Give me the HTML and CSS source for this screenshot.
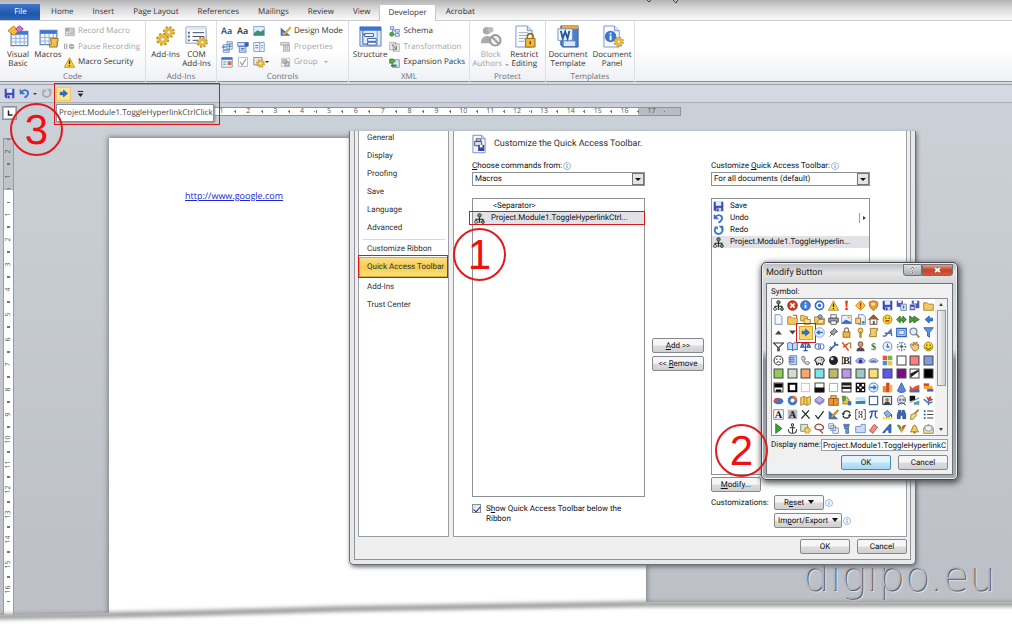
FILE: index.html
```html
<!DOCTYPE html>
<html lang="en">
<head>
<meta charset="utf-8">
<title>Customize the Quick Access Toolbar</title>
<link rel="stylesheet" href="styles.css">
</head>
<body>
<svg class="defs" aria-hidden="true">
  <symbol id="i-org" viewBox="0 0 16 16"><path d="M8 5v4M3 12V9h10v3M8 9v3" fill="none" stroke="#222" stroke-width="1.6"/><circle cx="8" cy="3.500" r="2.600" fill="#5a9a4a" stroke="#222"/><circle cx="3" cy="13" r="2.200" fill="#cde" stroke="#222"/><circle cx="8" cy="13" r="1.500" fill="#333"/><circle cx="13" cy="13" r="2.200" fill="#6a6" stroke="#222"/></symbol>
  <symbol id="i-save" viewBox="0 0 16 16"><path d="M1 1h14v14H3l-2-2z" fill="#3d49b5"/><path d="M4 1h8v6H4z" fill="#e6ebfa"/><path d="M5 10h7v5H5z" fill="#cdd3ee"/><path d="M6 11h2v4H6z" fill="#2a3390"/></symbol>
  <symbol id="i-undo" viewBox="0 0 16 16"><path d="M4 5c5-4 10-1 9 4-1 3-3 4-5 5" fill="none" stroke="#3f74cc" stroke-width="2.800"/><path d="M1 1v8h8z" fill="#3f74cc"/></symbol>
  <symbol id="i-redo" viewBox="0 0 16 16"><path d="M4 4c-3 4-1 9 4 9s7-5 5-9" fill="none" stroke="currentColor" stroke-width="2.800"/><path d="M8 1h7v7z" fill="currentColor"/><path d="M1 2h6v5z" fill="currentColor"/></symbol>
  <symbol id="i-right" viewBox="0 0 16 16"><path d="M3 6h5V3l6 5-6 5v-3H3z" fill="#2f6fd0" stroke="#1c4c9c" stroke-width=".8"/></symbol>
  <symbol id="i-warn" viewBox="0 0 16 16"><path d="M8 1l7.500 14H.5z" fill="#f8d23c" stroke="#a87d10"/><path d="M8 5v5M8 11.500v2" stroke="#222" stroke-width="1.800"/></symbol>
  <symbol id="i-info" viewBox="0 0 16 16"><circle cx="8" cy="8" r="7" fill="#fff" stroke="#76a3d6" stroke-width="1.500"/><path d="M8 7v5M8 4v2" stroke="#4f86c6" stroke-width="1.800"/></symbol>
  <symbol id="i-gear" viewBox="0 0 16 16"><circle cx="8" cy="8" r="6" fill="none" stroke="#b98d1c" stroke-width="3.500" stroke-dasharray="2.700 2"/><circle cx="8" cy="8" r="4.300" fill="#fff" stroke="#e5b83a" stroke-width="3.400"/><circle cx="8" cy="8" r="2.200" fill="none" stroke="#ab8019" stroke-width=".7"/></symbol>
  <symbol id="i-table" viewBox="0 0 16 16"><path d="M1 2h14v12H1z" fill="#f3f8ff" stroke="#6484b8"/><path d="M1 2h14v3H1z" fill="#3f77cf"/><path d="M1 8h14M1 11h14M5 5v9M8.500 5v9M12 5v9" stroke="#93afd9" stroke-width=".8"/></symbol>
</svg>

<header class="ribbon">
  <nav class="tabs" aria-label="Ribbon tabs">
    <button class="tab file">File</button><button class="tab">Home</button><button class="tab">Insert</button><button class="tab">Page Layout</button><button class="tab">References</button><button class="tab">Mailings</button><button class="tab">Review</button><button class="tab">View</button><button class="tab active">Developer</button><button class="tab">Acrobat</button>
    <svg class="caption-remnant" viewBox="0 0 34 4" aria-hidden="true"><path d="M2 0l2 2 2-2M28 0l3 3 2-3" fill="none" stroke="#444"/></svg>
  </nav>
  <div class="groups">
    <section class="group g-code">
      <div class="tools">
        <button class="big"><svg viewBox="0 0 24 24"><use href="#i-table" x="2" y="4" width="22" height="20"/><path d="M7 1l5 5-5 5-6-5z" fill="#f3bb3b" stroke="#b8841a"/><path d="M13 1l4 3-4 4-4-4z" fill="#d374cf" stroke="#9a3f97"/></svg><span>Visual<br>Basic</span></button>
        <button class="big"><svg viewBox="0 0 24 24"><use href="#i-table" x="1" y="3" width="22" height="20"/><path d="M14 14h8v3h-1v6h-8v-3h2z" fill="#f0bf55" stroke="#9e711b"/></svg><span>Macros</span></button>
        <div class="stack">
          <button class="small off"><svg viewBox="0 0 16 16"><path d="M2 3h13v11H2z" fill="#ddd" stroke="#999"/><path d="M2 3h6v5H2z" fill="#aaa"/><path d="M10 6h4M10 9h4M5 11h9" stroke="#999"/></svg>Record Macro</button>
          <button class="small off"><svg viewBox="0 0 16 16"><path d="M1 4v8M4 4v8" stroke="#999" stroke-width="1.500"/><circle cx="11" cy="8" r="4" fill="#aaa"/><path d="M9 8h5" stroke="#eee"/></svg>Pause Recording</button>
          <button class="small"><svg><use href="#i-warn"/></svg>Macro Security</button>
        </div>
      </div>
      <h2>Code</h2>
    </section>
    <section class="group g-addins">
      <div class="tools">
        <button class="big"><svg viewBox="0 0 24 24"><use href="#i-gear" x="9" y="1" width="13" height="13"/><use href="#i-gear" x="2" y="8" width="14" height="14"/></svg><span>Add-Ins</span></button>
        <button class="big"><svg viewBox="0 0 24 24"><path d="M1 2h21v17H1z" fill="#fafcff" stroke="#8797b4"/><path d="M1 2h21v3H1z" fill="#dce5f2"/><path d="M8 8h12M8 12h12M8 16h6" stroke="#446"/><path d="M3 8h2M3 12h2M3 16h2" stroke="#36b" stroke-width="2"/><use href="#i-gear" x="12" y="12" width="12" height="12"/></svg><span>COM<br>Add-Ins</span></button>
      </div>
      <h2>Add-Ins</h2>
    </section>
    <section class="group g-controls">
      <div class="tools">
        <div class="icon-grid">
          <button class="aa blue">Aa</button><button class="aa">Aa</button>
          <button aria-label="Picture"><svg viewBox="0 0 16 16"><path d="M1 2h14v12H1z" fill="#d9f1fb" stroke="#7891b5"/><path d="M1 11l5-4 4 2 5-3v8H1z" fill="#3a8f79"/></svg></button>
          <button aria-label="Building block"><svg viewBox="0 0 16 16"><path d="M3 5h8v10H3zM8 1h7v10H8z" fill="#e7effb" stroke="#5779b2"/><path d="M1 8h6M4 12h6M10 4h4M10 7h4" stroke="#36a" stroke-width="1.400"/></svg></button>
          <button aria-label="Combo box"><svg viewBox="0 0 16 16"><path d="M1 2h14v5H1zM3 7h9v8H3z" fill="#d7e4f8" stroke="#416ab0"/><path d="M10 2h5v5h-5z" fill="#3266b5"/><path d="M5 10h5M5 12h5" stroke="#36a"/></svg></button>
          <button aria-label="Drop-down list"><svg viewBox="0 0 16 16"><path d="M1 2h14v12H1z" fill="#eef4fd" stroke="#6e8ab7"/><path d="M9 2v12" stroke="#6e8ab7"/><path d="M3 6h4M3 9h4M11 6h2M11 9h2" stroke="#36a"/></svg></button>
          <button aria-label="Date picker"><svg viewBox="0 0 16 16"><path d="M1 2h14v13H1z" fill="#eaf1fb" stroke="#6c88b4"/><path d="M1 2h14v3H1z" fill="#3c73c8"/><path d="M9 7h5v5H9z" fill="#e7653f"/><path d="M3 8h4M3 11h4" stroke="#57a"/></svg></button>
          <button aria-label="Check box"><svg viewBox="0 0 16 16"><path d="M2 2h12v12H2z" fill="#fff" stroke="#aaa"/><path d="M4 8l3 4 5-8" fill="none" stroke="#999" stroke-width="1.600"/></svg></button>
          <button aria-label="Legacy tools" class="drop tight"><svg viewBox="0 0 16 16"><path d="M1 2h11v10H1z" fill="#e8e8e8" stroke="#777"/><use href="#i-gear" x="4" y="4" width="12" height="12"/></svg></button>
        </div>
        <div class="stack">
          <button class="small"><svg viewBox="0 0 16 16"><path d="M1 2v12h14z" fill="#4373c5"/><path d="M4 9v3h4z" fill="#fff"/><path d="M15 1L6 10l-2 4 4-2 8-9z" fill="#f0b43c" stroke="#9a6b14" stroke-width=".6"/></svg>Design Mode</button>
          <button class="small off"><svg viewBox="0 0 16 16"><path d="M1 2h12v4H1zM5 6h9v9H5z" fill="#ddd" stroke="#999"/><path d="M7 9h5M7 12h5" stroke="#999"/></svg>Properties</button>
          <button class="small off drop"><svg viewBox="0 0 16 16"><path d="M2 2h12v12H2z" fill="none" stroke="#999" stroke-dasharray="2 1"/><path d="M4 4h6v5H4zM7 7h6v6H7z" fill="#ccc" stroke="#888"/></svg>Group</button>
        </div>
      </div>
      <h2>Controls</h2>
    </section>
    <section class="group g-xml">
      <div class="tools">
        <button class="big"><svg viewBox="0 0 24 24"><path d="M1 2h22v20H1z" fill="#dfeafa" stroke="#5879b5"/><path d="M1 2h22v4H1z" fill="#3a75d4"/><path d="M6 9h9v3H6zM9 14h9v3H9zM9 18h9v3H9z" fill="#fff" stroke="#345c9c"/><path d="M4 6v14h5M4 10h2" fill="none" stroke="#345c9c"/><path d="M19 6v16" stroke="#7f9bcb"/></svg><span>Structure</span></button>
        <div class="stack">
          <button class="small"><svg viewBox="0 0 16 16"><path d="M2 1h5v4H2zM9 5h6v4H9zM9 11h6v4H9z" fill="#d8e6fb" stroke="#4c70ad"/><path d="M5 5v7h4M5 7h4" fill="none" stroke="#4c70ad"/><circle cx="4" cy="12" r="3.500" fill="#4a9f3f"/></svg>Schema</button>
          <button class="small off"><svg viewBox="0 0 16 16"><path d="M1 2h9v11H1zM6 4h9v11H6z" fill="#eee" stroke="#999"/><path d="M4 5l7 7M11 7v5H6" fill="none" stroke="#888" stroke-width="1.500"/></svg>Transformation</button>
          <button class="small"><svg viewBox="0 0 16 16"><path d="M5 4h10v11H5z" fill="#d8e6fb" stroke="#4c70ad"/><path d="M1 3h5l3 3-3 3H1z" fill="#5bad4c" stroke="#27702a"/><path d="M3 11h8v3H3z" fill="#347f3b"/></svg>Expansion Packs</button>
        </div>
      </div>
      <h2>XML</h2>
    </section>
    <section class="group g-protect">
      <div class="tools">
        <button class="big off drop-label"><svg viewBox="0 0 24 24"><circle cx="8" cy="6" r="4" fill="#aaa"/><circle cx="12" cy="5" r="3" fill="#bbb"/><path d="M2 19c0-10 13-10 13 0z" fill="#aaa"/><circle cx="17" cy="16" r="5.500" fill="#eee" stroke="#999" stroke-width="2"/><path d="M13 12l8 8" stroke="#999" stroke-width="2"/></svg><span>Block<br>Authors</span></button>
        <button class="big"><svg viewBox="0 0 24 24"><path d="M3 1h12l5 5v17H3z" fill="#fbfdff" stroke="#7e97c0"/><path d="M15 1v5h5" fill="#cfdcf0" stroke="#7e97c0"/><path d="M6 8h10M6 11h10M6 14h8M6 17h6" stroke="#9ab"/><path d="M15 14v-2c0-4 6-4 6 0v2" fill="none" stroke="#8c6a1c" stroke-width="1.600"/><path d="M13 14h10v9H13z" fill="#f2b933" stroke="#93691a"/><path d="M18 17v3" stroke="#543" stroke-width="1.500"/></svg><span>Restrict<br>Editing</span></button>
      </div>
      <h2>Protect</h2>
    </section>
    <section class="group g-templates">
      <div class="tools">
        <button class="big"><svg viewBox="0 0 24 24"><path d="M4 1h18v22H6l-2-2z" fill="#4c80cd" stroke="#2e5799"/><path d="M5 1h17v3H5z" fill="#f0a33b"/><path d="M7 17h12v5H7z" fill="#dce9fb"/><path d="M1 4h15v12H1z" fill="#f6faff" stroke="#6d94cf"/><path d="M4 6l2 8 2.500-7L11 14l2-8" fill="none" stroke="#2759a8" stroke-width="2"/></svg><span>Document<br>Template</span></button>
        <button class="big"><svg viewBox="0 0 24 24"><path d="M3 1h11l5 5v17H3z" fill="#f5f9ff" stroke="#7e97c0"/><path d="M14 1v5h5" fill="#d5e0f2" stroke="#7e97c0"/><circle cx="10" cy="12" r="6" fill="#3c77cc"/><path d="M10 11v5M10 8v2" stroke="#fff" stroke-width="2"/><use href="#i-gear" x="13" y="12" width="11" height="11"/></svg><span>Document<br>Panel</span></button>
      </div>
      <h2>Templates</h2>
    </section>
  </div>
</header>

<div class="qat">
  <button aria-label="Save"><svg><use href="#i-save"/></svg></button>
  <button aria-label="Undo" class="drop"><svg><use href="#i-undo"/></svg></button>
  <button aria-label="Redo" class="faded"><svg><use href="#i-redo"/></svg></button>
  <button aria-label="Toggle hyperlink click" class="hot"><svg><use href="#i-right"/></svg></button>
  <button aria-label="More"><svg viewBox="0 0 16 16"><path d="M4 5h8" stroke="#222" stroke-width="1.500"/><path d="M4 8h8l-4 5z" fill="#222"/></svg></button>
  <div class="tooltip" role="tooltip">Project.Module1.ToggleHyperlinkCtrlClick</div>
  <div class="mark mark-qat"></div>
</div>

<div class="ruler-row">
  <button class="tab-stop" aria-label="Left tab"><svg viewBox="0 0 16 16"><path d="M5 3v9h8" fill="none" stroke="#222" stroke-width="3"/></svg></button>
  <div class="hruler"><div class="inch-run" id="h-in"></div><div class="inch-run margin" id="h-out"></div></div>
</div>

<main class="workspace">
  <div class="vruler"><div class="v-out" id="v-out"></div><div class="v-in" id="v-in"></div></div>
  <article class="page"><a href="#">http://www.google.com</a></article>
  <div class="watermark">digipo.eu</div>

  <section class="options" aria-label="Word Options">
    <div class="options-body">
      <div class="panes">
        <nav class="side">
          <a href="#">General</a><a href="#">Display</a><a href="#">Proofing</a><a href="#">Save</a><a href="#">Language</a><a href="#">Advanced</a>
          <hr>
          <a href="#">Customize Ribbon</a><a href="#" class="selected">Quick Access Toolbar<i class="mark mark-nav"></i></a><a href="#">Add-Ins</a><a href="#">Trust Center</a>
        </nav>
        <div class="pane">
          <h1><svg viewBox="0 0 16 22"><path d="M1 1h10l4 4v16H1z" fill="#f1f5fc" stroke="#7287b5"/><path d="M11 1v4h4" fill="none" stroke="#7287b5"/><path d="M3 8h8v5H3zM5 5h5v3H5z" fill="#dde" stroke="#446"/><path d="M7 12h7v7H7z" fill="#3747a6"/><path d="M9 12h3v3H9z" fill="#fff"/></svg>Customize the Quick Access Toolbar.</h1>
          <div class="columns">
            <div class="col">
              <label for="from"><span><u>C</u>hoose commands from:</span><svg class="info"><use href="#i-info"/></svg></label>
              <div class="combo"><select id="from"><option>Macros</option></select></div>
              <ul class="list left-list">
                <li><span class="ico"></span>&nbsp;&lt;Separator&gt;</li>
                <li class="sel"><svg class="ico"><use href="#i-org"/></svg>Project.Module1.ToggleHyperlinkCtrl...<i class="mark mark-macro"></i></li>
              </ul>
              <label class="check"><input type="checkbox" checked><span>S<u>h</u>ow Quick Access Toolbar below the Ribbon</span></label>
            </div>
            <div class="mid">
              <button class="btn"><u>A</u>dd &gt;&gt;</button>
              <button class="btn">&lt;&lt; <u>R</u>emove</button>
            </div>
            <div class="col">
              <label for="to"><span>Customize <u>Q</u>uick Access Toolbar:</span><svg class="info"><use href="#i-info"/></svg></label>
              <div class="combo"><select id="to"><option>For all documents (default)</option></select></div>
              <ul class="list right-list">
                <li><svg class="ico"><use href="#i-save"/></svg>Save</li>
                <li class="sub"><svg class="ico"><use href="#i-undo"/></svg>Undo</li>
                <li><svg class="ico redo"><use href="#i-redo"/></svg>Redo</li>
                <li class="sel"><svg class="ico"><use href="#i-org"/></svg>Project.Module1.ToggleHyperlin...</li>
              </ul>
              <button class="btn modify"><u>M</u>odify...</button>
              <div class="custom">
                <span>Customizations:</span>
                <div><button class="btn arrow">R<u>e</u>set</button><svg class="info"><use href="#i-info"/></svg></div>
                <div><button class="btn arrow wide">Im<u>p</u>ort/Export</button><svg class="info"><use href="#i-info"/></svg></div>
              </div>
            </div>
          </div>
        </div>
      </div>
      <footer><button class="btn">OK</button><button class="btn">Cancel</button></footer>
    </div>
  </section>

  <section class="modify-dialog" aria-label="Modify Button">
    <header><h1>Modify Button</h1><button class="help" aria-label="Help"><svg viewBox="0 0 16 16"><path d="M5 6c0-4 6-4 6-1 0 2-3 2-3 5M8 12v2" fill="none" stroke="#fff" stroke-width="4"/><path d="M5 6c0-4 6-4 6-1 0 2-3 2-3 5M8 12v2" fill="none" stroke="#555" stroke-width="1.800"/></svg></button><button class="close" aria-label="Close"><svg viewBox="0 0 16 16"><path d="M3 4l10 8M13 4L3 12" stroke="#666" stroke-width="5"/><path d="M3 4l10 8M13 4L3 12" stroke="#fff" stroke-width="3.500"/></svg></button></header>
    <div class="client">
      <p>Symbol:</p>
      <div class="symbol-box">
        <div class="symbols" id="symbols"></div>
        <div class="scroll"><i></i><b></b><i class="down"></i></div>
      </div>
      <div class="name-row"><label for="dn">Display name:</label><input id="dn" type="text" value="Project.Module1.ToggleHyperlinkCtrlClick"></div>
      <div class="actions"><button class="btn primary">OK</button><button class="btn">Cancel</button></div>
    </div>
  </section>

  <svg class="torn" viewBox="0 0 1012 40" preserveAspectRatio="none" aria-hidden="true">
    <defs><filter id="soft" x="-5%" y="-50%" width="110%" height="200%"><feGaussianBlur stdDeviation="2"/></filter></defs>
    <path d="M0 24L109 22L200 20L340 16L520 13L646 11L1012 11V40H0z" fill="#fff"/>
    <path d="M-20 26L109 24L200 22L340 18L520 15L646 13L1032 13" fill="none" stroke="#8f8f8f" stroke-width="5" filter="url(#soft)"/>
    <path d="M-20 34L200 29L340 25L646 20L1032 20V60H-20z" fill="#fff" filter="url(#soft)"/>
  </svg>

  <div class="step step-1">1</div>
  <div class="step step-2">2</div>
  <div class="step step-3">3</div>
</main>
<script src="app.js"></script>
</body>
</html>
```

FILE: styles.css
```css
*, *::before, *::after { box-sizing: border-box; }
body {
  margin: 0;
  min-height: 100vh;
  display: flex;
  flex-direction: column;
  overflow: hidden;
  background: #fff;
  color: #333;
  font: 8px/10px "Open Sans", "Noto Sans", sans-serif;
  text-rendering: geometricPrecision;
}
button, select, input { font: inherit; color: inherit; text-rendering: inherit; }
button { padding: 0; border: 0; background: none; }
h1, h2, p, ul { margin: 0; padding: 0; font-weight: 400; }
a { color: inherit; text-decoration: none; }
.defs { position: absolute; width: 0; height: 0; }

/* Ribbon */
.tabs {
  position: relative;
  display: flex;
  align-items: flex-end;
  height: 21px;
  background: linear-gradient(#b4b4b4, #dedede 50%, #fafafa);
  border-bottom: 1px solid #c9cbce;
}
.caption-remnant { position: absolute; left: 645px; top: 0; width: 34px; height: 4px; }
.tab { height: 16px; padding: 0 9px 0 10px; white-space: nowrap; }
.tab.file { width: 40px; margin-right: 1px; color: #fff; background: linear-gradient(#3f78cc, #2156ac 60%, #2b66bd); }
.tab.active { height: 17px; margin-bottom: -1px; padding: 0 8px; background: #fff; border: 1px solid #c4c7cb; border-bottom: 0; border-radius: 2px 2px 0 0; }
.groups {
  display: flex;
  height: 64px;
  background: linear-gradient(#fff 45%, #eceff4);
  border-bottom: 1px solid #9ba0a8;
  box-shadow: inset 0 -2px #d6dae0, inset 0 -3px #8d939b;
}
.group { display: flex; flex-direction: column; padding: 4px 4px 2px; border-right: 1px solid #dcdfe4; }
.group h2 { font-size: 8px; line-height: 10px; text-align: center; color: #6c7079; }
.tools { flex: 1; display: flex; }
.g-code { width: 146px; }
.g-addins { width: 71px; }
.g-controls { width: 132px; }
.g-xml { width: 121px; }
.g-protect { width: 76px; }
.g-templates { width: 89px; padding-left: 2px; padding-right: 2px; }
.g-templates .tools { gap: 4px; }
.g-templates .big, .g-protect .big { flex: 1; }
.big { display: flex; flex-direction: column; align-items: center; min-width: 28px; line-height: 9px; white-space: nowrap; }
.g-code .big { margin-right: 2px; }
.g-addins .big { flex: 1; }
.big svg { width: 23px; height: 23px; margin-bottom: 2px; }
.stack { display: flex; flex-direction: column; justify-content: space-between; height: 43px; }
.g-xml .stack { margin-left: 2px; }
.small { display: flex; align-items: center; gap: 3px; height: 12px; white-space: nowrap; }
.small svg { width: 11px; height: 11px; }
.off { color: #a3a5a8; }
.icon-grid { display: grid; grid-template-columns: repeat(3, 16px); grid-template-rows: repeat(3, 12px); justify-content: start; align-content: space-between; height: 43px; width: 59px; }
.icon-grid svg { width: 12px; height: 12px; display: block; flex: none; }
.icon-grid button { display: flex; align-items: center; }
.aa { font-size: 9px; font-weight: 600; }
.aa.blue { color: #234c94; }
.drop::after, .drop-label span::after {
  content: "";
  display: inline-block;
  margin-left: 3px;
  border: 2px solid transparent;
  border-top-color: currentColor;
  border-bottom: 0;
}
.tight::after { margin-left: 0; }

/* Quick access toolbar */
.qat {
  position: relative;
  display: flex;
  align-items: center;
  gap: 4px;
  height: 18px;
  padding-left: 4px;
  background: #d3d8e2;
  border-bottom: 1px solid #a9aeb7;
}
.qat button { display: flex; align-items: center; height: 14px; }
.qat svg { width: 11px; height: 11px; }
.qat .faded { color: #a9adb4; }
.qat .hot { width: 15px; justify-content: center; background: #fde692; border: 1px solid #eccb62; }
.tooltip {
  position: absolute;
  z-index: 3;
  left: 56px;
  top: 19px;
  width: 158px;
  padding: 2px;
  background: #fff;
  border: 1px solid #8e9299;
  box-shadow: 1px 1px 2px #888;
  line-height: 12px;
  white-space: nowrap;
  color: #444;
}
.mark { position: absolute; border: 1px solid #dc1519; pointer-events: none; }
.mark-qat { left: 54px; top: -2px; width: 166px; height: 42px; z-index: 4; }

/* Rulers */
.ruler-row { display: flex; align-items: flex-start; height: 28px; padding-top: 3px; background: #cad0d7; }
.tab-stop { width: 15px; height: 14px; margin-left: 2px; background: #fff; border: 2px solid #b6bac1; outline: 1px solid #8e939b; outline-offset: -1px; display: grid; place-items: center; }
.tab-stop svg { width: 8px; height: 8px; }
.hruler { display: flex; width: 473px; height: 9px; margin: 1px 0 0 191px; }
.inch-run { display: grid; grid-auto-flow: column; grid-auto-columns: 1fr; flex: 1; background: #fff; border: solid #8f939a; border-width: 1px 0; }
.inch-run.margin { flex: 0 0 43px; grid-auto-columns: 27px; background: #b8bcc3; border-right-width: 1px; }
.inch { display: flex; justify-content: space-between; align-items: center; line-height: 7px; font-size: 7px; color: #555; }
.inch::before, .inch::after { content: ""; width: 1px; height: 3px; background: #777; }
.inch::after { width: 1px; height: 1px; }
.vruler { display: flex; flex-direction: column; width: 11px; margin: 7px 95px 0 3px; border: solid #989ca3; border-width: 0 1px; }
.v-out { height: 52px; background: #bfc4cb; border-top: 1px solid #8b9097; border-bottom: 1px solid #aaa; }
.v-in { flex: 1; padding-top: 12px; background: #fff; }
.vruler .inch { flex-direction: column; height: 25px; }
.vruler .inch span { transform: rotate(-90deg); }
.vruler .inch::before, .vruler .inch::after { width: 3px; height: 1px; }

/* Workspace */
.workspace { position: relative; flex: 1; display: flex; background: linear-gradient(#cbd0d6, #bdc1c7 88%); }
.page { flex: 0 1 537px; margin-top: 7px; padding: 51px 76px; background: #fff; box-shadow: 0 0 5px 1px #777b80; font-size: 9px; line-height: 14px; color: #2323d8; }
.page a { text-decoration: underline; }
.watermark {
  position: absolute;
  left: 802px;
  top: 422px;
  font: 200 42px/46px "DejaVu Sans", sans-serif;
  color: #b4b8be;
  text-shadow: 1px 1px #555b63, 2px 2px 1px #e2e5e8;
}

/* Options window */
.options, .modify-dialog { font-family: Roboto, "Open Sans", sans-serif; }
.options {
  position: absolute;
  left: 349px;
  top: 0;
  width: 567px;
  padding: 0 4px 4px;
  background: #e6e8ea;
  border: 1px solid #6d7176;
  border-top: 0;
  border-radius: 0 0 5px 5px;
  box-shadow: 1px 2px 4px #6d7176;
}
.options-body { padding: 0 3px; background: #efefef; border: 1px solid #909499; border-top: 0; }
.panes { display: flex; gap: 4px; }
.side, .pane { background: #fff; border: 1px solid #9a9da3; border-top: 0; }
.side { flex: 0 0 91px; display: flex; flex-direction: column; gap: 4px; color: #333; }
.side a { height: 14px; padding-left: 8px; line-height: 14px; white-space: nowrap; }
.side hr { width: 82px; margin: 0 auto -2px; border: 0; border-top: 1px solid #d5dae2; }
.side .selected { position: relative; height: 20px; margin: -3px 0 -1px; line-height: 18px; background: linear-gradient(#fbe08a, #f6cb4e 50%, #fbe27c); border: 1px solid #d8a93a; padding-left: 7px; }
.mark-nav { inset: -3px -1px -2px -2px; }
.pane { flex: 1; padding: 0 0 8px 18px; }
.pane h1 { display: flex; align-items: center; gap: 8px; height: 26px; font-size: 9px; color: #333; }
.pane h1 svg { width: 14px; height: 20px; }
.columns { display: grid; grid-template-columns: 173px 52px 159px; column-gap: 7px; padding-top: 3px; color: #111; }
.col { display: flex; flex-direction: column; align-items: stretch; }
.col > label:first-child { display: flex; align-items: center; gap: 1px; height: 12px; }
.info { width: 8px; height: 8px; }
.combo { position: relative; height: 14px; border: 1px solid #8d9095; }
.combo select { width: 100%; height: 12px; padding: 0 2px; border: 0; background: #fff; appearance: none; line-height: 12px; display: block; }
.combo::after { content: ""; position: absolute; right: 0; top: 0; width: 12px; height: 12px; border: 1px solid #777; background: #e4e4e4; }
.combo::before { content: ""; position: absolute; z-index: 1; right: 3px; top: 5px; border: 3px solid transparent; border-top-color: #111; border-bottom: 0; }
.list { list-style: none; margin-top: 12px; padding: 1px 0; border: 1px solid #8d9095; background: #fff; }
.left-list { height: 299px; }
.right-list { height: 277px; }
.list li { position: relative; display: flex; align-items: center; gap: 6px; height: 12px; padding-left: 1px; white-space: nowrap; }
.ico { width: 11px; height: 11px; flex: none; }
.redo { color: #3f74cc; }
.list .sel { background: #e2e2e6; }
.mark-macro { inset: -1px -1px -1px -4px; }
.sub::after { content: ""; position: absolute; right: 3px; border: 2px solid transparent; border-left: 3px solid #345; border-right: 0; }
.sub::before { content: ""; position: absolute; right: 9px; height: 10px; border-left: 1px solid #99a; }
.check { display: flex; gap: 5px; padding-top: 7px; line-height: 10px; }
.check span { width: 136px; }
.check input { appearance: none; width: 9px; height: 9px; margin: 0; border: 1px solid #8a8f98; background: linear-gradient(135deg, #d5def0, #f4f8ff); flex: none; display: grid; place-items: center; }
.check input::after { content: ""; width: 4px; height: 7px; margin-top: -1px; border: solid #26357c; border-width: 0 1px 1px 0; transform: rotate(40deg); }
.btn { height: 15px; min-width: 50px; padding: 0 3px; border: 1px solid #85888d; border-radius: 2px; background: linear-gradient(#f6f6f6 45%, #dcdcdc 55%, #d0d0d0); color: #111; white-space: nowrap; line-height: 13px; }
.mid { display: flex; flex-direction: column; gap: 3px; padding-top: 178px; }
.modify { align-self: flex-start; margin-top: 2px; }
.custom { display: grid; grid-template-columns: 63px 1fr; row-gap: 3px; margin-top: 3px; align-items: center; }
.custom div { grid-column: 2; display: flex; align-items: center; gap: 1px; }
.custom > span { grid-row: 1; grid-column: 1; white-space: nowrap; }
.custom .wide { min-width: 65px; }
.arrow::after { content: ""; display: inline-block; margin: 0 0 1px 4px; border: 3px solid transparent; border-top: 4px solid #111; border-bottom: 0; }
.options footer { display: flex; justify-content: flex-end; gap: 7px; padding: 2px 0 5px; }

/* Modify Button window */
.modify-dialog {
  position: absolute;
  left: 761px;
  top: 131px;
  width: 197px;
  padding: 0 4px 4px;
  border: 1px solid #44484c;
  border-radius: 5px;
  background: linear-gradient(#b6b9bc, #e4e6e8 10px, #cfd1d3 22px, #dcdee0 40%, #8e9194 45%, #a9acaf);
  box-shadow: 1px 2px 6px 1px #4b4f53, inset 0 0 0 1px #eceef0;
}
.modify-dialog header { display: flex; height: 20px; }
.modify-dialog h1 { flex: 1; padding-top: 4px; font-size: 9px; line-height: 12px; color: #222; }
.help, .close { height: 12px; margin-top: 1px; border: 1px solid #6d7074; display: grid; place-items: center; }
.help { width: 19px; background: linear-gradient(#dcdee0, #a9acb0); border-radius: 0 0 0 3px; }
.close { width: 31px; background: linear-gradient(#e5a08f, #c8402a 50%, #d6583c); border-radius: 0 0 3px 0; }
.help svg, .close svg { width: 9px; height: 8px; }
.client { padding: 2px 4px 4px; background: #f0f0f0; border: 1px solid #6f7378; color: #111; }
.client p { height: 12px; line-height: 12px; }
.symbol-box { display: flex; height: 138px; border: 1px solid #8d9095; background: #fff; }
.symbols { flex: 1; display: grid; grid-template-columns: repeat(12, 1fr); grid-template-rows: repeat(10, 1fr); }
.symbols button { position: relative; display: grid; place-items: center; min-width: 0; min-height: 0; }
.symbols svg { width: 11px; height: 11px; }
.symbols .picked { background: #fbd56b; outline: 1px solid #dba52c; outline-offset: -1px; }
.symbols .mark { inset: -3px; }
.scroll { width: 12px; display: flex; flex-direction: column; align-items: center; justify-content: space-between; padding: 4px 0; background: #f1f1f1; }
.scroll i { border: 2px solid transparent; border-bottom: 3px solid #444; border-top: 0; }
.scroll .down { border-bottom: 0; border-top: 3px solid #444; margin-top: 42px; }
.scroll b { flex: 1; width: 9px; margin-top: 4px; background: linear-gradient(90deg, #f4f4f4, #cfcfd2); border: 1px solid #96999d; }
.name-row { display: flex; align-items: center; justify-content: space-between; margin-top: 3px; white-space: nowrap; }
.name-row input { width: 127px; height: 12px; padding: 0 1px; border: 1px solid #9b9ea4; background: #fff; line-height: 10px; }
.actions { display: flex; justify-content: flex-end; gap: 7px; margin-top: 4px; }
.primary { border-color: #3c8cbc; background: linear-gradient(#e4f3fb 45%, #bfe3f6 55%, #a6d8f0); }

/* Overlays */
.torn { position: absolute; left: 0; bottom: 0; width: 100%; height: 40px; }
.step { position: absolute; width: 53px; height: 53px; border: 2px solid #e01b1d; border-radius: 50%; color: #ef1010; font: 42px/50px "Liberation Sans", Arial, sans-serif; text-align: center; }
.step-1 { left: 453px; top: 97px; }
.step-2 { left: 715px; top: 293px; }
.step-3 { left: 10px; top: -28px; z-index: 5; }
```

FILE: app.js
```javascript
const p = (d, fill, stroke, w) =>
  `<path d="${d}" fill="${fill || "none"}"${stroke ? ` stroke="${stroke}" stroke-width="${w || 1.2}"` : ""}/>`;
const c = (x, y, r, fill, stroke, w) =>
  `<circle cx="${x}" cy="${y}" r="${r}" fill="${fill || "none"}"${stroke ? ` stroke="${stroke}" stroke-width="${w || 1.2}"` : ""}/>`;
const use = (id) => `<use href="#i-${id}"/>`;
const sq = (fill) => p("M1.500 1.500h13v13h-13z", fill, "#444", 1.5);
const glyph = (t, fill, extra = "") =>
  `<text x="8" y="13.500" text-anchor="middle" font-size="15" font-weight="700" font-family="Liberation Serif" fill="${fill}" ${extra}>${t}</text>`;
const doc = p("M3 1h7l3 3v11H3z", "#f6f9ff", "#6a80a8");
const folder = p("M1 4h5l2 2h7v9H1z", "#f2c860", "#a67c22");
const smile = c(8, 8, 6.5, "#f5d92c", "#9a7d10") + c(5.5, 6, 1, "#222") + c(10.5, 6, 1, "#222");

const icons = [
  use("org"),
  c(8, 8, 7, "#dd3a1d", "#8f2010") + p("M5 5l6 6M11 5l-6 6", "", "#fff", 2.4),
  c(8, 8, 7, "#3f7fd8", "#1f4f9a") + p("M8 7v5M8 3.500v2", "", "#fff", 2.4),
  c(8, 8, 6, "#fff", "#3a6fc4", 2.4) + c(8, 8, 2.5, "#3a6fc4"),
  use("warn"),
  p("M6 1h4l-1 9H7z", "#e8361c") + c(8, 13, 2, "#e8361c"),
  p("M8 1l7 7-7 7-7-7z", "#fbc63b", "#b97c14") + p("M8 4v5M8 10.500v2", "", "#a31", 2),
  p("M8 1l6 2c1 6-2 10-6 12C4 13 1 9 2 3z", "#f09a2c", "#98601a") + p("M5 4h5v4H5z", "#fde7a6"),
  use("save"),
  p("M1 1h9v9H1z", "#4a58bd") + p("M3 1h5v3H3z", "#fff") + p("M7 6h8v9H7z", "#eaf0fb", "#556fa8") + p("M9 10h4M11 8v5", "", "#36a"),
  p("M4 1h11v11H4z", "#4a58bd") + p("M7 1h5v4H7z", "#fff") + p("M1 6h8v9H1z", "#4450b0", "#dde") + p("M3 10h4v3H3z", "#dde"),
  folder,
  doc,
  folder + p("M9 2h5v4", "", "#d1652a", 1.6),
  p("M1 2h5l1 2h4v6H1z", "#f2c860", "#a67c22") + p("M6 7h4l1 1h4v7H6z", "#fbe09a", "#a67c22"),
  folder + c(9, 4, 3, "#86a8da", "#557") + p("M4 14l3-6h8l-2 6z", "#fbe09a", "#a67c22"),
  p("M4 1h8v5H4z", "#fff", "#556") + p("M1 6h14v6H1z", "#98a0ac", "#445") + p("M4 10h8v5H4z", "#fff", "#445"),
  p("M1 2h14v12H1z", "#eaf5ff", "#6689b8") + p("M1 13l6-5 8 4v2H1z", "#3c6cc4") + c(11, 5, 1.5, "#e6a22b"),
  p("M5 1h7l3 3v11H5z", "#eaf0fb", "#6a80a8") + p("M1 6h7v8H1z", "#f1d28a", "#936b25") + c(12, 12, 2, "#4a7bc8"),
  p("M8 1l7 7h-2v7H3V8H1z", "#fff", "#633") + p("M8 1l7 7H1z", "#9c5730") + p("M7 10h3v5H7z", "#573"),
  smile + p("M5 10h6", "", "#c31", 2.4),
  p("M1 8l5-5v3h4V3l5 5-5 5v-3H6v3z", "#4f9a3b", "#2c6b20"),
  p("M1 3l6 4V3l8 5-8 5V9l-6 4z", "#4f9a3b", "#2c6b20"),
  p("M14 6H9V3L3 8l6 5v-3h5z", "#3f79d6", "#2856a3"),

  p("M3 11h10L8 5z", "#444"),
  p("M3 5h10l-5 6z", "#444"),
  use("right"),
  c(8, 8, 7, "#e8f1fd", "#6d98d8") + p("M13 7H8V4L3 8l5 4V9h5z", "#2f6bc9"),
  p("M2 14l4-4M9 2l5 5-3 1-3 4-5-4 4-3z", "#9da4ae", "#444"),
  p("M5 8V5c0-5 6-5 6 0v3", "", "#876", 1.8) + p("M3 7h10v8H3z", "#efb643", "#8d6519"),
  c(8, 5, 3.5, "#f5cd5a", "#97701b") + p("M7 8h2v7H7z", "#e6b23c", "#97701b"),
  p("M3 2h11v3h-2v9H2v-3h2z", "#efcb6b", "#97701b"),
  p("M1 13h4l8-9 1 9M4 9h9", "", "#4672c0", 2.2),
  p("M1 2h14v12H1z", "#a7c7f4", "#2f62b8", 1.6) + p("M4 5h8v6H4z", "#d9e8fd", "#5583c9"),
  c(6.500, 6.500, 5, "#e1effb", "#7085a6", 1.8) + p("M10 10l5 5", "", "#a67a38", 2.5),
  p("M1 1h14L9.500 8v7l-3-2V8z", "#5c93e2", "#2c5ca8"),

  p("M1 3h14L9 9v5H7V9z", "#fff", "#333", 1.6),
  p("M8 4C5 2 3 2 1 3v10c2-1 5-1 7 1 2-2 5-2 7-1V3c-2-1-4-1-7 1z", "#c6d9f6", "#2d5da8") + p("M8 4v10", "", "#2d5da8"),
  p("M8 1v13M2 4h12M5 14h6M1 9h5L3.500 4zM10 9h5l-2.500-5z", "#7fa2dd", "#2c57a8", 1.6),
  c(5.500, 8, 4, "", "#4e74bb", 1.6) + c(10.500, 8, 4, "", "#6d8fce", 1.6),
  p("M2 14L12 4M10 1c-1 4 1 6 5 4", "", "#3c66b2", 2.4) + p("M2 10c3-4 4 0 1 5", "", "#345"),
  p("M2 2l9 12M3 9l7-5", "", "#e04a24", 2.4) + p("M10 3h4v8", "", "#c87a2a", 2),
  c(8, 4.500, 3.500, "#cf9c74", "#643") + p("M2 15c0-8 12-8 12 0z", "#4a4a52") + p("M7 9h2l-1 5z", "#d33"),
  glyph("$", "#3c7a35"),
  c(8, 8, 6.500, "#eaf2fd", "#6f93c8", 1.5) + p("M8 4v5h3", "", "#356", 1.4) + c(8, 8, 2, "#5c8bd6"),
  c(8, 8, 6, "", "#4c78c0", 2).replace("/>", ' stroke-dasharray="2 2"/>') + c(8, 8, 2, "#345") + p("M8 2v12M2 8h12", "", "#567", 0.8),
  p("M3 9L2 5l2-1 2 3V2h2l1 4 1-4h2v5l2-2v5c-1 5-8 7-10 0z", "#f0c987", "#96683a"),
  smile + p("M4 9c2 4 6 4 8 0", "", "#222", 1.4),

  c(8, 8, 6.500, "#fff", "#333", 1.5) + c(5.500, 6, 1, "#222") + c(10.500, 6, 1, "#222") + p("M5 12c1-3 5-3 6 0", "", "#222", 1.4),
  p("M4 1h10v13H4z", "#c2d5f2", "#5878ae") + p("M2 4h9M2 7h9M2 10h9", "", "#4468aa", 1.4),
  p("M3 2c-2 4 3 12 9 12l2-3-3-2-2 2c-2-1-3-3-3-4l2-1-2-4z", "#d8dbe0", "#667"),
  p("M2 6c3-4 9-4 12-1l1 3-2 3-1 3h-2l-1-2H6v2H4l-1-4-2-2z", "#ddd", "#222", 1.5) + c(11, 7, 1, "#222"),
  c(8, 8, 6.500, "#222") + c(6, 5.500, 2.200, "#ddd"),
  glyph("B", "#222") + p("M1 3h3M12 3h3M2 3v10M14 3v10M1 13h3M12 13h3", "", "#222"),
  p("M1 9c3-6 11-6 14 0-3 4-11 4-14 0z", "#b7c4ef", "#4c56a8") + c(8, 9, 2.800, "#2c3892"),
  p("M1 9c3-5 11-5 14 0-3 3-11 3-14 0z", "#c9d6f4", "#6b7fb8") + p("M4 9h8", "", "#4f67a8", 2),
  p("M1 1h6.500v6.500H1z", "#e5583b") + p("M8.500 1H15v6.500H8.500z", "#79b44b") + p("M1 8.500h6.500V15H1z", "#5a88d8") + p("M8.500 8.500H15V15H8.500z", "#f4c63c"),
  sq("#fff"), sq("#f5837a"), sq("#7f9be0"),

  sq("#92cc5a"), sq("#d3dfca"), sq("#f8a66c"), sq("#7fe3ea"), sq("#bdb966"), sq("#b49be6"),
  sq("#9ccac0"), sq("#fbdf72"), sq("#5a5af0"), sq("#7a0a86"),
  sq("#fff") + p("M2 14V8l12-6v3z", "#222"), sq("#000"),

  sq("#fff") + p("M2 2h12v6H2zM4 11h8v3H4z", "#000"),
  p("M2.500 2.500h11v11h-11z", "#fff", "#000", 3),
  p("M2 2h12v12H2z", "#fff", "#777", 1.2).replace("/>", ' stroke-dasharray="1.500 1.500"/>'),
  sq("#fff") + p("M1 8h14v7H1z", "#111"),
  p("M2 2h12v12H2z", "#fff", "#999"),
  sq("#fff") + p("M1 1h14v4H1zM1 7h14v3H1z", "#222"),
  p("M1 1h14v14H1z", "#111") + p("M3 3h3v3H3zM10 3h3v3h-3zM6.500 6.500h3v3h-3zM3 10h3v3H3zM10 10h3v3h-3z", "#fff"),
  c(8, 8, 6.500, "#e8f3fd", "#4a8bd0", 1.5) + p("M3 7h5V4l5 4-5 4V9H3z", "#2f70c8"),
  p("M1 6h5v9H1z", "#e28f2a") + p("M6 1h5v14H6z", "#d9442a") + p("M11 4h4v11h-4z", "#f3b93b"),
  p("M8 1l6 12c-3 3-9 3-12 0z", "#5688e0", "#2d55a3"),
  p("M1 15V5l4 4 4-3 6-2v11z", "#e5502f") + p("M1 15v-4l5 2 4-3 5 2v3z", "#3c6cc8"),
  p("M1 2h8v4H1z", "#d9442a") + p("M1 6h13v4H1z", "#f0a72f") + p("M6 10h9v4H6z", "#3c6cc8"),

  p("M1 9c0-6 14-6 14 0s-14 6-14 0z", "#4274c8") + p("M8 8L1 9c0-4 3-5 7-5z", "#e0502f"),
  c(8, 8, 5, "", "#3a78c8", 4) + p("M8 3a5 5 0 0 1 5 5", "", "#e8762c", 4),
  p("M1 4l5-2 4 2 5-2v11l-5 2-4-2-5 2z", "#f6cf56", "#a67c22") + p("M6 2v11M10 4v11", "", "#a67c22"),
  p("M8 2l7 5-7 5-7-5z", "#b9b0e8", "#6f66b0") + p("M1 7v3l7 5 7-5V7l-7 5z", "#8d84cf"),
  p("M1 5h14v10H1z", "#ef9432", "#8f5617") + p("M4 1h8v4H4z", "#f7bf6c", "#8f5617") + p("M8 5v10", "", "#8f5617"),
  p("M2 13c2-1 2-9 6-10 4 1 4 9 6 10z", "#f1c644", "#967020") + p("M1 1h6v7l-5 2z", "#5a9c48") + p("M10 9h5v6h-5z", "#3f6fc9"),
  p("M1 3h14v10H1z", "#bfe6f5") + p("M1 9l14-2v6H1z", "#2f8fa8") + p("M1 8h14", "", "#fff", 1),
  p("M2 2h12v12H2z", "#fff", "#4368aa", 1.8),
  p("M1 2h13v12H1z", "#d9e4f6", "#333", 1.4) + c(7.500, 7, 2.500, "#b5704b") + p("M3 14c0-6 9-6 9 0z", "#345"),
  c(8, 7, 6, "#dfe7f0", "#567") + c(6, 7, 2, "#789") + c(11, 7, 2, "#789") + p("M3 15c2-5 8-5 11 0", "", "#456", 1.6),
  p("M1 1h8v6L1 9z", "#111") + p("M7 14h8V8l-8 3z", "#4da3a8") + p("M1 11l14-7", "", "#555"),
  p("M8 9L4 2l4 2 3-3 1 4 3 2-5 2z", "#d9442a") + p("M8 15V7M8 12L1 6M8 12l6-2", "", "#3b7bb8", 2),

  p("M1 1h14v14H1z", "#fff", "#777") + glyph("A", "#111"),
  p("M1 1h14v14H1z", "#b7bac0") + glyph("A", "#111"),
  p("M3 2l11 12M13 2L2 14", "", "#222", 1.8),
  p("M2 9l4 5 8-11", "", "#333", 1.8),
  p("M1 2v13h14z", "#3f70c6") + p("M14 1L5 10l-1 3 3-1 8-9z", "#f0b43c", "#966917"),
  p("M3 7c2-6 9-5 10-1M13 9c-2 6-9 5-10 1", "", "#333", 1.8) + p("M1 6h5l-3 4zM15 10h-5l3-4z", "#333"),
  p("M4 1H1v14h3M12 1h3v14h-3", "", "#333") + p("M6 3v4M10 3v4M6 9v4M10 9v4M7 8h3", "", "#333", 1.5),
  p("M2 5c1-2 2-2 4-2h8M6 4c0 5-1 7-3 10M11 4c-1 5-1 9 3 9", "", "#2b50a5", 2),
  p("M3 6l5-4 6 6-6 5z", "#8fb0e4", "#355b9c") + p("M1 12h14v3H1z", "#f5e22e") + p("M14 8v4", "", "#258", 1.6),
  p("M2 8l2-6h3v4h2V2h3l2 6v6h-4V9H6v5H2z", "#3d69b9", "#24457f"),
  p("M14 1L8 7", "", "#a57a36", 2.5) + p("M3 8l6-2 2 3-5 6H2z", "#f1d884", "#8c762e"),
  p("M6 3h9M6 8h9M6 13h9", "", "#444", 1.6) + c(2.500, 3, 1.5, "#36b") + c(2.500, 8, 1.5, "#36b") + c(2.500, 13, 1.5, "#36b"),

  p("M4 1l9 7-9 7z", "#3ba23a", "#1f6d24"),
  c(8, 3, 1.800, "", "#333", 1.5) + p("M8 5v10M4 7h8M2 9c0 8 12 8 12 0", "", "#333", 1.5),
  p("M1 2h10v10H1z", "#dbe8cf", "#776") + `<use href="#i-gear" x="5" y="5" width="11" height="11"/>`,
  p("M7 10C-3 9 2 0 9 2s6 9-1 8l5 5", "", "#a0483e", 1.8),
  p("M1 1h7v7H1zM4 4h7v7H4zM7 7h8v8H7z", "#eef4fd", "#6a88b8"),
  p("M4 2h8v2H4zM5 5h6v3H5zM7 9h4v6H7z", "#7399d6", "#41649f"),
  p("M1 5h7l1-3h6v12H1z", "#c8dcf6", "#6487bd"),
  p("M9 2l5 4-7 9-5-4z", "#f28b8b", "#a84646"),
  p("M1 14L11 2h2v12h-3v-4H6l-2 4z", "#3a6fd0", "#234f9f"),
  p("M8 14L1 3c5-2 7 3 7 5z", "#4d9f45") + p("M8 14l7-11c-5-2-7 3-7 5z", "#e5562b") + p("M8 14V7", "", "#f0b62f", 2),
  p("M2 13c3-2 2-9 6-10 4 1 3 8 6 10z", "#f4cb56", "#97701b") + c(8, 14, 1.5, "#97701b"),
  p("M1 7l7-5 7 5v8H1z", "#fbe0a0", "#9a7529") + p("M3 4h10v6l-5 2-5-2z", "#e9f2fd", "#6d8fc4")
];

document.getElementById("symbols").innerHTML = icons
  .map((body, i) => {
    const picked = i === 26;
    return `<button${picked ? ' class="picked"' : ""} aria-label="Symbol ${i + 1}"><svg viewBox="0 0 16 16">${body}</svg>${picked ? '<i class="mark"></i>' : ""}</button>`;
  })
  .join("");

const inches = (id, numbers) => {
  document.getElementById(id).innerHTML = numbers.map((n) => `<div class="inch"><span>${n}</span></div>`).join("");
};
const upTo = (n) => Array.from({ length: n }, (_, i) => i + 1);
inches("h-in", upTo(16));
inches("h-out", [17]);
inches("v-out", [2, 1]);
inches("v-in", upTo(16));
```
